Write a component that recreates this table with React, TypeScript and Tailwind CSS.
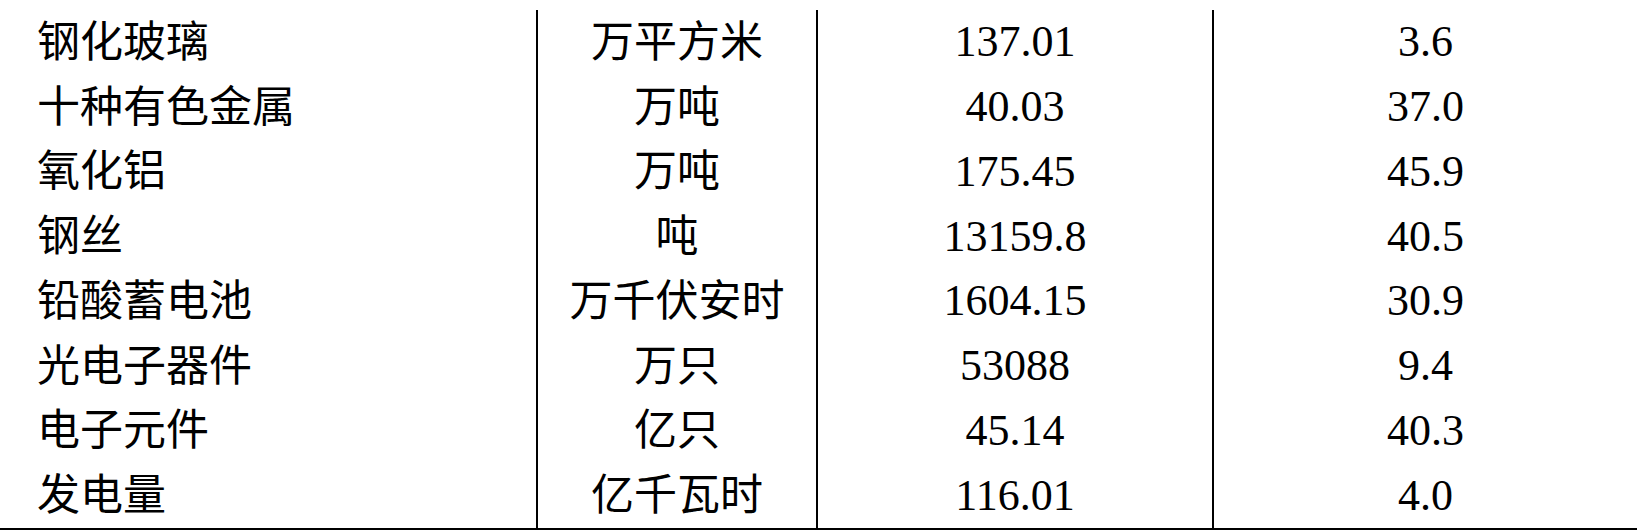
import React from "react";

const rows: [string, string, string, string][] = [
  ["钢化玻璃", "万平方米", "137.01", "3.6"],
  ["十种有色金属", "万吨", "40.03", "37.0"],
  ["氧化铝", "万吨", "175.45", "45.9"],
  ["钢丝", "吨", "13159.8", "40.5"],
  ["铅酸蓄电池", "万千伏安时", "1604.15", "30.9"],
  ["光电子器件", "万只", "53088", "9.4"],
  ["电子元件", "亿只", "45.14", "40.3"],
  ["发电量", "亿千瓦时", "116.01", "4.0"],
];

export default function App() {
  return (
    <div
      className="w-[1637px] h-[530px] bg-white text-black pt-[10px] overflow-hidden"
      style={{ fontFamily: '"Liberation Serif", "Noto Sans CJK SC", serif' }}
    >
      <div className="grid grid-cols-[536px_280px_396px_425px] border-b-2 border-black leading-none">
        {rows.map((r, i) => (
          <React.Fragment key={i}>
            <div className="h-[64.75px] flex items-center pl-[37px] text-[43px]">{r[0]}</div>
            <div className="h-[64.75px] flex items-center justify-center border-l-2 border-black text-[43px]">{r[1]}</div>
            <div className="h-[64.75px] flex items-center justify-center border-l-2 border-black text-[44px]">{r[2]}</div>
            <div className="h-[64.75px] flex items-center justify-center border-l-2 border-black text-[44px]">{r[3]}</div>
          </React.Fragment>
        ))}
      </div>
    </div>
  );
}
